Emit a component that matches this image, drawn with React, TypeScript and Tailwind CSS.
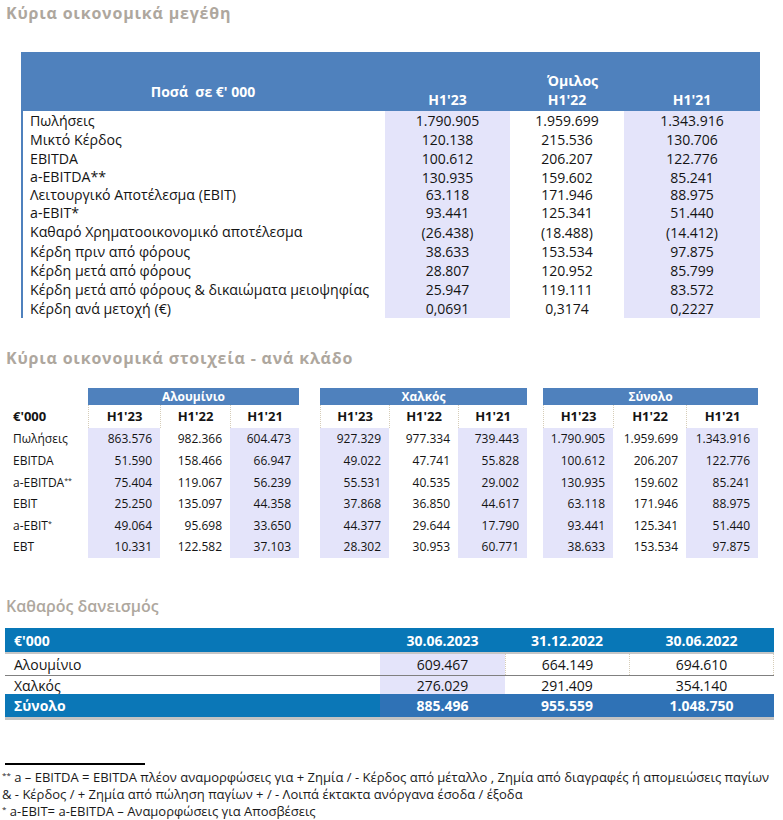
import React from "react";

const LAV = "bg-[#e4e4fa]";

const t1Rows: [string, string, string, string, number][] = [
  ["Πωλήσεις", "1.790.905", "1.959.699", "1.343.916", 19],
  ["Μικτό Κέρδος", "120.138", "215.536", "130.706", 19],
  ["EBITDA", "100.612", "206.207", "122.776", 19],
  ["a-EBITDA**", "130.935", "159.602", "85.241", 18],
  ["Λειτουργικό Αποτέλεσμα (EBIT)", "63.118", "171.946", "88.975", 17],
  ["a-EBIT*", "93.441", "125.341", "51.440", 19],
  ["Καθαρό Χρηματοοικονομικό αποτέλεσμα", "(26.438)", "(18.488)", "(14.412)", 20],
  ["Κέρδη πριν από φόρους", "38.633", "153.534", "97.875", 19],
  ["Κέρδη μετά από φόρους", "28.807", "120.952", "85.799", 19],
  ["Κέρδη μετά από φόρους & δικαιώματα μειοψηφίας", "25.947", "119.111", "83.572", 19],
  ["Κέρδη ανά μετοχή (€)", "0,0691", "0,3174", "0,2227", 19],
];

type Seg = { label: React.ReactNode; a: string[]; b: string[]; c: string[]; h: number };

const t2Rows: Seg[] = [
  { label: "Πωλήσεις", a: ["863.576", "982.366", "604.473"], b: ["927.329", "977.334", "739.443"], c: ["1.790.905", "1.959.699", "1.343.916"], h: 22 },
  { label: "EBITDA", a: ["51.590", "158.466", "66.947"], b: ["49.022", "47.741", "55.828"], c: ["100.612", "206.207", "122.776"], h: 22 },
  {
    label: (
      <>
        a-EBITDA<sup className="text-[7px] relative top-[-2px]">**</sup>
      </>
    ),
    a: ["75.404", "119.067", "56.239"], b: ["55.531", "40.535", "29.002"], c: ["130.935", "159.602", "85.241"], h: 21,
  },
  { label: "EBIT", a: ["25.250", "135.097", "44.358"], b: ["37.868", "36.850", "44.617"], c: ["63.118", "171.946", "88.975"], h: 22 },
  {
    label: (
      <>
        a-EBIT<sup className="text-[7px] relative top-[-2px]">*</sup>
      </>
    ),
    a: ["49.064", "95.698", "33.650"], b: ["44.377", "29.644", "17.790"], c: ["93.441", "125.341", "51.440"], h: 21,
  },
  { label: "EBT", a: ["10.331", "122.582", "37.103"], b: ["28.302", "30.953", "60.771"], c: ["38.633", "153.534", "97.875"], h: 22 },
];

const aW = ["w-[72px]", "w-[70px]", "w-[69px]"];
const bW = ["w-[69px]", "w-[69px]", "w-[69px]"];
const cW = ["w-[70px]", "w-[73px]", "w-[72px]"];

function Group({ vals, widths }: { vals: string[]; widths: string[] }) {
  return (
    <div className="flex">
      {vals.map((v, i) => (
        <div
          key={i}
          className={`${widths[i]} ${i === 1 ? "bg-white" : LAV} flex items-center justify-end pr-[8px]`}
        >
          {v}
        </div>
      ))}
    </div>
  );
}

function SubHead({ widths }: { widths: string[] }) {
  return (
    <div className="flex">
      {widths.map((w, i) => (
        <div
          key={i}
          className={`${w} border-l border-dotted border-[#d6cdb8] flex items-center justify-center font-bold text-[13px]`}
        >
          {["H1'23", "H1'22", "H1'21"][i]}
        </div>
      ))}
    </div>
  );
}

export default function App() {
  return (
    <div
      className="w-[783px] h-[820px] bg-white text-[#141414] overflow-hidden"
      style={{ fontFamily: "'Open Sans', 'Noto Sans', sans-serif" }}
    >
      {/* Title 1 */}
      <div className="pl-[6px] pt-[1px] h-[52px] text-[16px] font-bold tracking-[0.8px] text-[#aea79e] leading-[24px]">
        Κύρια οικονομικά μεγέθη
      </div>

      {/* Table 1 */}
      <div className="ml-[21px] w-[739px]">
        <div className="h-[59px] bg-[#4f81bd] flex text-white font-bold">
          <div className="w-[364px] flex items-end justify-center pb-[10px] text-[14px] leading-[18px]">
            Ποσά&nbsp; σε €' 000
          </div>
          <div className="w-[375px] flex flex-col">
            <div className="h-[18px] mt-[19px] flex items-center justify-center text-[14px]">Όμιλος</div>
            <div className="flex h-[20px] text-[14px]">
              <div className="w-[125px] flex items-center justify-center">H1'23</div>
              <div className="w-[114px] flex items-center justify-center">H1'22</div>
              <div className="w-[136px] flex items-center justify-center">H1'21</div>
            </div>
          </div>
        </div>
        <div className="border-l-2 border-[#4f81bd] text-[14px]">
          {t1Rows.map(([l, a, b, c, h], i) => (
            <div key={i} className="flex" style={{ height: h }}>
              <div className="w-[362px] pl-[7px] flex items-center text-[14.2px]">{l}</div>
              <div className={`w-[125px] ${LAV} flex items-center justify-center`}>{a}</div>
              <div className="w-[114px] flex items-center justify-center">{b}</div>
              <div className={`w-[136px] ${LAV} flex items-center justify-center`}>{c}</div>
            </div>
          ))}
        </div>
      </div>

      {/* Title 2 */}
      <div className="mt-[28px] pl-[6px] h-[42px] text-[16px] font-bold tracking-[0.8px] text-[#aea79e] leading-[24px]">
        Κύρια οικονομικά στοιχεία - ανά κλάδο
      </div>

      {/* Table 2 */}
      <div className="text-[12px]">
        <div className="flex h-[17px] text-white font-bold">
          <div className="w-[88px]" />
          <div className="w-[211px] bg-[#4f81bd] flex items-center justify-center">Αλουμίνιο</div>
          <div className="w-[21px]" />
          <div className="w-[207px] bg-[#4f81bd] flex items-center justify-center">Χαλκός</div>
          <div className="w-[16px]" />
          <div className="w-[215px] bg-[#4f81bd] flex items-center justify-center">Σύνολο</div>
        </div>
        <div className="flex h-[23px]">
          <div className="w-[88px] pl-[13px] flex items-center font-bold text-[13px]">€'000</div>
          <SubHead widths={aW} />
          <div className="w-[21px]" />
          <SubHead widths={bW} />
          <div className="w-[16px]" />
          <SubHead widths={cW} />
        </div>
        {t2Rows.map((r, i) => (
          <div key={i} className="flex" style={{ height: r.h }}>
            <div className="w-[88px] pl-[13px] flex items-center">{r.label}</div>
            <Group vals={r.a} widths={aW} />
            <div className="w-[21px]" />
            <Group vals={r.b} widths={bW} />
            <div className="w-[16px]" />
            <Group vals={r.c} widths={cW} />
          </div>
        ))}
      </div>

      {/* Title 3 */}
      <div className="mt-[36px] pl-[6px] h-[34px] text-[16px] font-semibold text-[#aea79e] leading-[24px]">
        Καθαρός δανεισμός
      </div>

      {/* Table 3 */}
      <div className="ml-[5px] w-[769px] text-[14px]">
        <div className="flex h-[26px] bg-[#0877b7] text-white font-bold border-b-2 border-[#c6c6c6]">
          <div className="w-[375px] pl-[9px] flex items-end pb-[1px]">€'000</div>
          <div className="w-[125px] flex items-end justify-center pb-[1px]">30.06.2023</div>
          <div className="w-[124px] flex items-end justify-center pb-[1px]">31.12.2022</div>
          <div className="w-[145px] flex items-end justify-center pb-[1px]">30.06.2022</div>
        </div>
        <div className="flex h-[22px] border-b border-[#808080]">
          <div className="w-[375px] pl-[9px] flex items-center">Αλουμίνιο</div>
          <div className={`w-[125px] ${LAV} flex items-center justify-center`}>609.467</div>
          <div className="w-[124px] border-l border-dotted border-[#d6cdb8] flex items-center justify-center">664.149</div>
          <div className="w-[145px] border-l border-r border-dotted border-[#d6cdb8] flex items-center justify-center">694.610</div>
        </div>
        <div className="flex h-[18px]">
          <div className="w-[375px] pl-[9px] flex items-center">Χαλκός</div>
          <div className={`w-[125px] ${LAV} flex items-center justify-center`}>276.029</div>
          <div className="w-[124px] flex items-center justify-center">291.409</div>
          <div className="w-[145px] flex items-center justify-center">354.140</div>
        </div>
        <div className="flex h-[26px] text-white font-bold border-b-[3px] border-[#c3c3c3]">
          <div className="w-[375px] pl-[9px] bg-[#0b77b7] flex items-center">Σύνολο</div>
          <div className="w-[394px] bg-[#2f72b6] flex">
            <div className="w-[125px] flex items-center justify-center">885.496</div>
            <div className="w-[124px] flex items-center justify-center">955.559</div>
            <div className="w-[145px] flex items-center justify-center">1.048.750</div>
          </div>
        </div>
      </div>

      {/* Footnotes */}
      <div className="mt-[43px] ml-[5px] w-[140px] h-[2px] bg-black" />
      <div className="pl-[2px] pt-[4px] text-[13px] leading-[17px] text-[#1a1a1a]">
        <div className="whitespace-nowrap">
          <sup className="text-[8px]">**</sup> a – EBITDA = EBITDA πλέον αναμορφώσεις για + Ζημία / - Κέρδος από μέταλλο , Ζημία από διαγραφές ή απομειώσεις παγίων
        </div>
        <div className="whitespace-nowrap">&amp; - Κέρδος / + Ζημία από πώληση παγίων + / - Λοιπά έκτακτα ανόργανα έσοδα / έξοδα</div>
        <div className="whitespace-nowrap">
          <sup className="text-[8px]">*</sup> a-EBIT= a-EBITDA – Αναμορφώσεις για Αποσβέσεις
        </div>
      </div>
    </div>
  );
}
